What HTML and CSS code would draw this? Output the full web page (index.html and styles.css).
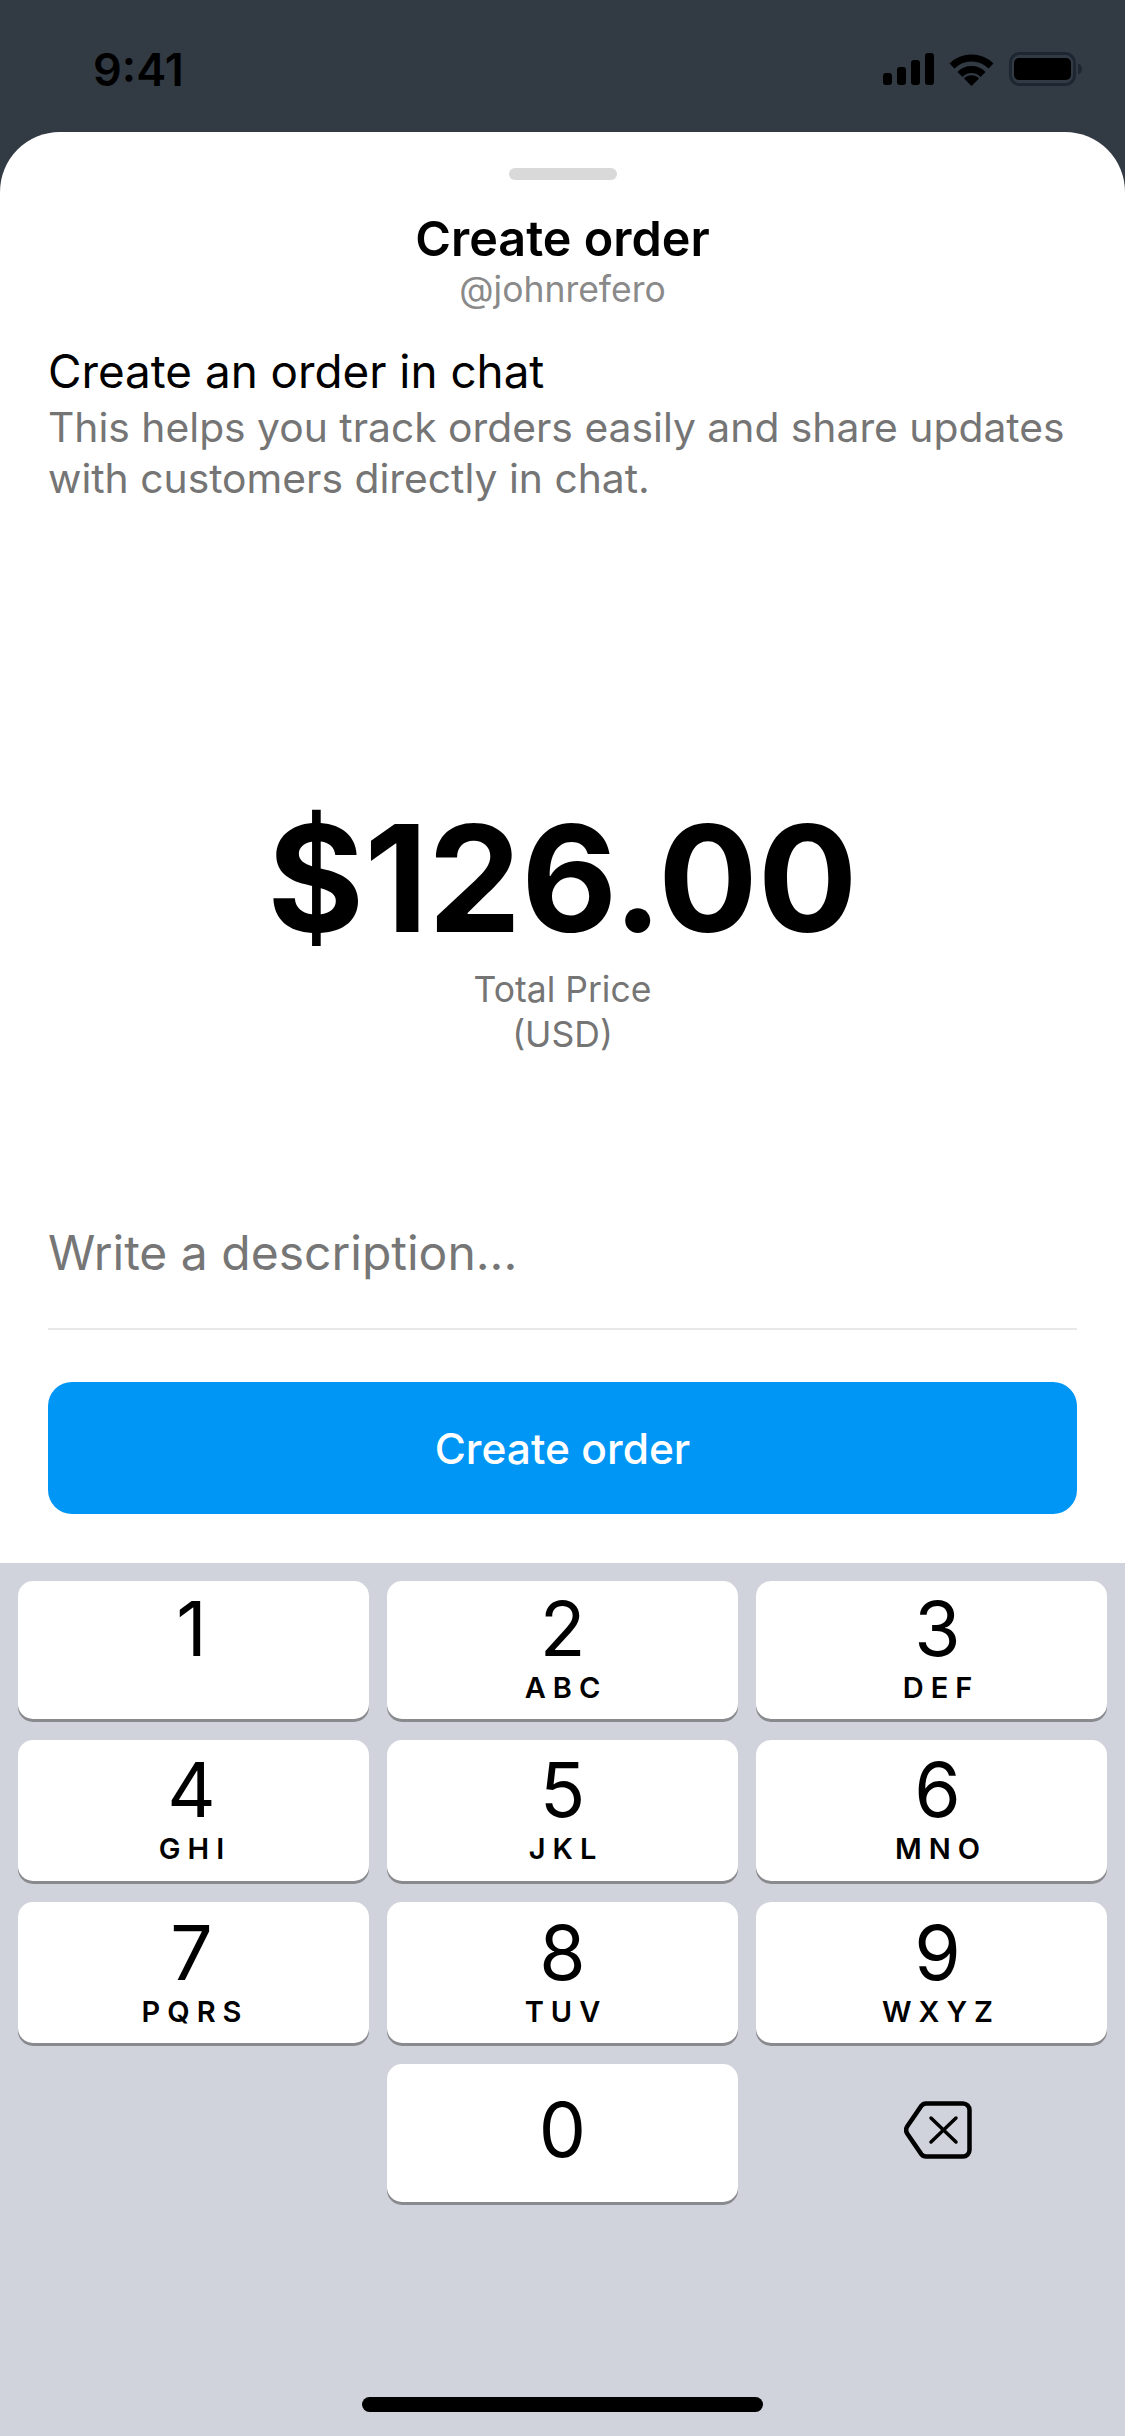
FILE: index.html
```html
<!DOCTYPE html>
<html lang="en">
<head>
  <meta charset="UTF-8" />
  <meta name="viewport" content="width=device-width, initial-scale=1.0"/>
  <title>Create order</title>
  <link rel="stylesheet" href="styles.css">
</head>
<body>

  <header class="status-bar">
    <div class="status-time">9:41</div>
    <div class="status-icons">
      <svg width="51" height="32" viewBox="0 0 51 32">
        <rect x="0" y="20" width="9" height="12" rx="3"/>
        <rect x="14" y="14" width="9" height="18" rx="3"/>
        <rect x="28" y="7" width="9" height="25" rx="3"/>
        <rect x="42" y="0" width="9" height="32" rx="3"/>
      </svg>
      <svg width="45" height="33" viewBox="0 0 45 33">
        <path d="M3 13A28 28 0 0 1 42 13" fill="none" stroke="#000" stroke-width="7"/>
        <path d="M11 21.5A16 16 0 0 1 34 21.5" fill="none" stroke="#000" stroke-width="7"/>
        <path d="M22.5 33L15 25.5A10.5 10.5 0 0 1 30 25.5Z"/>
      </svg>
      <svg width="73" height="34" viewBox="0 0 73 34">
        <rect x="1.5" y="1.5" width="64" height="31" rx="9" fill="none" stroke="#1e2731" stroke-width="3"/>
        <rect x="5" y="6" width="57" height="22" rx="5"/>
        <path d="M69 11.5c2.5 .8 4 3 4 5.5s-1.5 4.7-4 5.5Z" fill="#1e2731"/>
      </svg>
    </div>
  </header>

  <main class="sheet">
    <div class="sheet-handle"></div>
    <h1 class="sheet-title">Create order</h1>
    <div class="sheet-user">@johnrefero</div>

    <h2 class="intro-title">Create an order in chat</h2>
    <p class="intro-text">This helps you track orders easily and share updates with customers directly in chat.</p>

    <div class="price">
      <div class="price-amount">$126.00</div>
      <div class="price-label">Total Price<br>(USD)</div>
    </div>

    <div class="description">Write a description...</div>
    <button class="create-btn">Create order</button>
  </main>

  <section class="keyboard">
    <div class="keypad">
      <div class="key"><span class="key-num">1</span></div>
      <div class="key"><span class="key-num">2</span><span class="key-sub">ABC</span></div>
      <div class="key"><span class="key-num">3</span><span class="key-sub">DEF</span></div>
      <div class="key"><span class="key-num">4</span><span class="key-sub">GHI</span></div>
      <div class="key"><span class="key-num">5</span><span class="key-sub">JKL</span></div>
      <div class="key"><span class="key-num">6</span><span class="key-sub">MNO</span></div>
      <div class="key"><span class="key-num">7</span><span class="key-sub">PQRS</span></div>
      <div class="key"><span class="key-num">8</span><span class="key-sub">TUV</span></div>
      <div class="key"><span class="key-num">9</span><span class="key-sub">WXYZ</span></div>
      <div class="key-blank"></div>
      <div class="key"><span class="key-num">0</span></div>
      <div class="key-blank key-delete">
        <svg width="68" height="58" viewBox="0 0 68 58" fill="none" stroke="#000">
          <path stroke-width="4.5" d="M22 2.5H59a6.5 6.5 0 0 1 6.5 6.5V49a6.5 6.5 0 0 1-6.5 6.5H22a6 6 0 0 1-4.7-2.4L3.5 33a7 7 0 0 1 0-8L17.3 4.9A6 6 0 0 1 22 2.5Z"/>
          <path stroke-width="3.5" stroke-linecap="round" d="M27 17L52 41M52 17L27 41"/>
        </svg>
      </div>
    </div>
    <div class="home-bar"></div>
  </section>

</body>
</html>
```

FILE: styles.css
```css
* {
  box-sizing: border-box;
}

body {
  margin: 0;
  width: 1125px;
  height: 2436px;
  display: flex;
  flex-direction: column;
  font-family: 'Inter', sans-serif;
  background-color: #323a44;
  color: #000;
  overflow: hidden;
}

.status-bar {
  height: 132px;
  display: flex;
  justify-content: space-between;
  align-items: center;
  padding: 12px 43px 6px 93px;
}

.status-time {
  font-size: 45px;
  font-weight: 600;
}

.status-icons {
  display: flex;
  align-items: center;
  gap: 15px;
}

.sheet {
  height: 1431px;
  padding: 36px 48px 0;
  background-color: #fff;
  border-radius: 60px 60px 0 0;
}

.sheet-handle {
  width: 108px;
  height: 12px;
  margin: 0 auto;
  background-color: #d9d9d9;
  border-radius: 6px;
}

.sheet-title {
  margin: 30px 0 0;
  font-size: 48.5px;
  line-height: 58px;
  font-weight: 600;
  text-align: center;
}

.sheet-user {
  font-size: 35.5px;
  line-height: 44px;
  color: #8a8a8a;
  text-align: center;
}

.intro-title {
  margin: 32px 0 2px;
  font-size: 45.8px;
  line-height: 56px;
  font-weight: 400;
}

.intro-text {
  margin: 0;
  font-size: 40.8px;
  line-height: 51px;
  color: #757575;
}

.price {
  margin-top: 289px;
  text-align: center;
}

.price-amount {
  font-size: 148px;
  line-height: 172px;
  font-weight: 700;
}

.price-label {
  margin-top: 2px;
  font-size: 35.5px;
  line-height: 45px;
  color: #757575;
}

.description {
  height: 111px;
  margin-top: 162px;
  padding-top: 4px;
  font-size: 48px;
  line-height: 60px;
  color: #767676;
  border-bottom: 2px solid #e8e8e8;
}

.create-btn {
  display: block;
  width: 100%;
  height: 132px;
  margin-top: 52px;
  border: 0;
  border-radius: 24px;
  background-color: #0096f6;
  color: #fff;
  font-family: inherit;
  font-size: 42.5px;
  font-weight: 500;
}

.keyboard {
  flex: 1;
  display: flex;
  flex-direction: column;
  padding: 18px 18px 24px;
  background-color: #d0d3db;
}

.keypad {
  display: grid;
  grid-template-columns: repeat(3, 351px);
  grid-template-rows: 138px 141px 141px 138px;
  gap: 21px 18px;
}

.key {
  display: flex;
  flex-direction: column;
  align-items: center;
  padding-top: 6px;
  background-color: #fff;
  border-radius: 15px;
  box-shadow: 0 3px 0 #898a8e;
}

/* rows sit a little differently on the real keyboard */
.key:nth-child(n+4) {
  padding-top: 8px;
}

.key:nth-child(n+7) {
  padding-top: 9px;
}

.key:nth-child(11) {
  padding-top: 24px;
}

.key:nth-child(3n+1) {
  padding-right: 4px;
}

.key:nth-child(3n) {
  padding-left: 12px;
}

.key-num {
  font-size: 75px;
  line-height: 84px;
}

.key-sub {
  font-size: 29px;
  line-height: 34px;
  font-weight: 600;
  letter-spacing: 7px;
  margin-right: -7px;
}

.key-delete {
  display: flex;
  justify-content: center;
  padding: 37px 0 0 12px;
}

.home-bar {
  width: 401px;
  height: 15px;
  margin: auto auto 0;
  background-color: #000;
  border-radius: 8px;
}
```
